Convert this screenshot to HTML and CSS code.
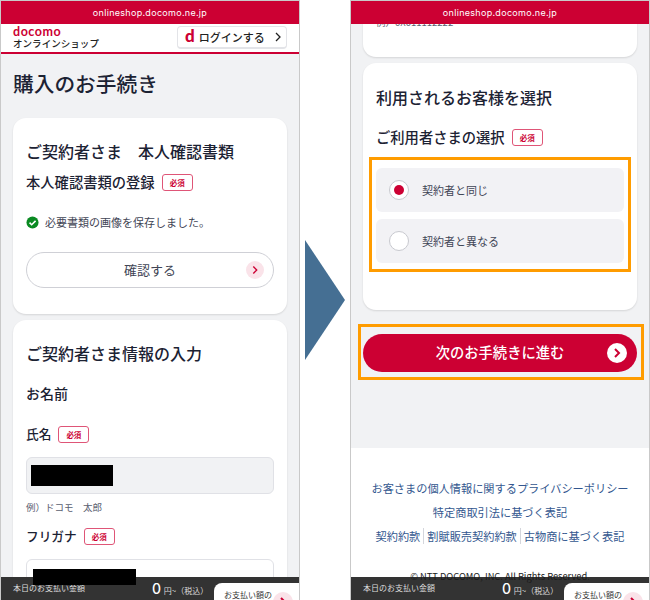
FILE: index.html
```html
<!DOCTYPE html>
<html lang="ja">
<head>
<meta charset="utf-8">
<title>購入のお手続き</title>
<link rel="stylesheet" href="styles.css">
</head>
<body>
<div class="page">
  <section class="phone">
    <div class="urlbar">onlineshop.docomo.ne.jp</div>
    <header class="site">
      <div class="brand">
        <span class="logo">docomo</span>
        <span class="shop">オンラインショップ</span>
      </div>
      <a class="login">
        <span class="d">d</span><span>ログインする</span>
        <svg class="login-chev" viewBox="0 0 8 12"><path d="M2 2l4 4-4 4" fill="none" stroke="#222" stroke-width="1.3"/></svg>
      </a>
    </header>
    <main class="content">
      <h1 class="title">購入のお手続き</h1>
      <div class="card card-doc">
        <h2 class="h2">ご契約者さま　本人確認書類</h2>
        <div class="label label-doc"><span>本人確認書類の登録</span><span class="req">必須</span></div>
        <div class="saved">
          <svg class="check" viewBox="0 0 14 14"><circle cx="7" cy="7" r="6.5" fill="#0a8a22"/><path d="M3.8 7.2l2.3 2.2 4.2-4.2" fill="none" stroke="#fff" stroke-width="1.7"/></svg>
          <span>必要書類の画像を保存しました。</span>
        </div>
        <a class="confirm">確認する
          <span class="confirm-ic"><svg viewBox="0 0 14 14"><path d="M5 3l4 4-4 4" fill="none" stroke="#cc0033" stroke-width="1.6"/></svg></span>
        </a>
      </div>
      <div class="card card-info">
        <h2 class="h2">ご契約者さま情報の入力</h2>
        <div class="label label-name"><span>お名前</span></div>
        <div class="label label-sei"><span>氏名</span><span class="req">必須</span></div>
        <div class="field filled"><span class="mask mask-a"></span></div>
        <div class="hint">例）ドコモ　太郎</div>
        <div class="label label-kana"><span>フリガナ</span><span class="req">必須</span></div>
        <div class="field"><span class="mask mask-b"></span></div>
      </div>
    </main>
    <div class="paybar">
      <span class="pay-label">本日のお支払い金額</span>
      <span class="pay-amount"><b>0</b> 円~（税込）</span>
      <span class="pay-tab">お支払い額の<i class="pay-dot"><svg viewBox="0 0 20 20"><path d="M8 6l4 4-4 4" fill="none" stroke="#cc0033" stroke-width="2"/></svg></i></span>
    </div>
  </section>

  <div class="gap"><div class="arrow"></div></div>

  <section class="phone">
    <div class="urlbar urlbar-over">onlineshop.docomo.ne.jp</div>
    <main class="content content-r">
      <div class="card card-tail"><div class="hint hint-tail">例）0X011112222</div></div>
      <div class="card card-user">
        <h2 class="h2 h2-user">利用されるお客様を選択</h2>
        <div class="label label-user"><span>ご利用者さまの選択</span><span class="req">必須</span></div>
        <div class="mark mark-radio">
          <div class="radio-row"><span class="radio on"></span><span>契約者と同じ</span></div>
          <div class="radio-row"><span class="radio"></span><span>契約者と異なる</span></div>
        </div>
      </div>
      <div class="mark mark-next">
        <a class="next">次のお手続きに進む
          <span class="next-ic"><svg viewBox="0 0 20 20"><path d="M8 6l4 4-4 4" fill="none" stroke="#cc0033" stroke-width="2"/></svg></span>
        </a>
      </div>
    </main>
    <footer class="foot">
      <a>お客さまの個人情報に関するプライバシーポリシー</a>
      <a>特定商取引法に基づく表記</a>
      <div class="foot-row"><a>契約約款</a><a>割賦販売契約約款</a><a>古物商に基づく表記</a></div>
      <small class="copy">© NTT DOCOMO, INC. All Rights Reserved.</small>
    </footer>
    <div class="paybar">
      <span class="pay-label">本日のお支払い金額</span>
      <span class="pay-amount"><b>0</b> 円~（税込）</span>
      <span class="pay-tab">お支払い額の<i class="pay-dot"><svg viewBox="0 0 20 20"><path d="M8 6l4 4-4 4" fill="none" stroke="#cc0033" stroke-width="2"/></svg></i></span>
    </div>
  </section>
</div>
</body>
</html>
```
FILE: styles.css
```css
* { box-sizing: border-box; }
html, body { margin: 0; padding: 0; background: #fff; }
body { font-family: "Noto Sans CJK JP", "Noto Sans", sans-serif; color: #1c2233; }
a { display: block; }
.page { display: flex; width: 650px; height: 600px; }
.phone {
  position: relative; width: 300px; height: 600px; flex: none;
  display: flex; flex-direction: column; overflow: hidden;
  background: #f1f2f4; border: 1px solid #c9c9c9; border-bottom: 0;
}
.gap { width: 50px; flex: none; display: flex; align-items: center; padding-left: 5px; }
.arrow { width: 40px; height: 120px; background: #456f93; clip-path: polygon(0 0, 100% 50%, 0 100%); }
.urlbar {
  height: 23px; flex: none; background: #cc0033; color: #fff;
  font: 400 9px/23px "Inter", "Liberation Sans", sans-serif; letter-spacing: .3px; text-align: center;
}
.urlbar-over { position: absolute; left: 0; right: 0; top: 0; z-index: 3; }

.site {
  height: 30px; flex: none; display: flex; justify-content: space-between; align-items: center;
  padding: 0 12px 0 12px; background: #fff; border-bottom: 2px solid #cc0033;
}
.brand { display: flex; flex-direction: column; }
.logo { font: 700 12.5px/10px "Lato", sans-serif; color: #cc0033; letter-spacing: .55px; }
.shop { font-size: 9.5px; line-height: 12px; font-weight: 500; color: #222; letter-spacing: .05px; white-space: nowrap; }
.login {
  width: 110px; height: 23px; margin-top: -2px; display: flex; align-items: center;
  padding-left: 7px; font-size: 11px; font-weight: 500; color: #222; white-space: nowrap;
  background: #fff; border: 1px solid #e3e4e8; border-bottom-width: 2px; border-radius: 4px;
}
.d { font: 900 17px/15px "Lato", sans-serif; color: #cc0033; margin-right: 4px; margin-top: -3px; }
.login-chev { width: 8px; height: 12px; margin-left: 9px; }

.content { padding: 0 12px; flex: none; }
.title { margin: 14px 0 0; font-size: 20.7px; line-height: 30px; font-weight: 500; color: #1c2233; }
.card { background: #fff; border-radius: 13px; box-shadow: 0 1px 2px rgba(0,0,0,.12); padding: 0 13px; }
.card-doc { height: 196px; margin-top: 20px; padding-top: 21px; }
.card-info { margin-top: 6px; padding-top: 21px; height: 300px; }
.h2 { margin: 0; font-size: 16px; line-height: 24px; font-weight: 500; color: #1c2233; white-space: nowrap; }
.label { display: flex; align-items: center; gap: 7px; font-size: 14.3px; line-height: 20px; font-weight: 500; color: #1c2233; }
.req {
  width: 31px; height: 17px; border: 1px solid #df5577; border-radius: 3px; color: #cc0033;
  font-size: 7.5px; font-weight: 700; line-height: 15px; text-align: center;
}
.label-doc { margin-top: 9px; }
.saved { display: flex; align-items: center; gap: 6px; margin-top: 22px; font-size: 11px; line-height: 16px; color: #3f4555; }
.check { width: 13px; height: 13px; }
.confirm {
  position: relative; height: 36px; margin-top: 22px; border: 1px solid #cfd0d6; border-radius: 18px;
  text-align: center; font-size: 13px; line-height: 33px; color: #3f4555;
}
.confirm-ic {
  position: absolute; right: 9px; top: 8px; width: 18px; height: 18px; border-radius: 50%;
  background: #fae3e9; display: flex; align-items: center; justify-content: center;
}
.confirm-ic svg { width: 12px; height: 12px; }

.label-name { margin-top: 18px; font-size: 14px; }
.label-sei { margin-top: 21px; font-size: 12.7px; }
.field { height: 37px; margin-top: 13px; border: 1px solid #e0e1e6; border-radius: 6px; padding: 7px 4px; }
.filled { background: #f1f2f4; }
.mask { display: block; position: relative; z-index: 3; background: #000; }
.mask-a { width: 82px; height: 21px; }
.mask-b { width: 103px; height: 16px; margin: 2px 0 0 2px; }
.hint { margin-top: 5px; font-size: 9.5px; line-height: 16px; color: #5a6070; }
.label-kana { margin-top: 11px; font-size: 12.7px; }
.label-kana + .field { margin-top: 13px; }

.card-tail { height: 56px; border-radius: 0 0 13px 13px; padding-top: 13px; }
.hint-tail { margin: 0; }
.card-user { height: 247px; margin-top: 6px; padding: 22px 13px 0; }
.label-user { margin-top: 18px; }
.mark { border: 3px solid #ff9c00; }
.mark-radio { width: 262px; height: 115px; margin: 10px 0 0 -7px; padding: 8px 4px 0; }
.radio-row {
  height: 44px; margin-bottom: 7px; background: #f2f2f5; border-radius: 6px;
  display: flex; align-items: center; gap: 13px; padding-left: 13px;
  font-size: 11px; color: #3f4555;
}
.radio { width: 20px; height: 20px; border-radius: 50%; background: #fff; border: 1px solid #c8c9cf; display: flex; align-items: center; justify-content: center; }
.radio.on::before { content: ""; width: 10px; height: 10px; border-radius: 50%; background: #cc0033; }
.mark-next { width: 286px; height: 56px; margin: 14px 0 0 -5px; padding: 7px 2px; }
.next {
  position: relative; height: 38px; width: 274px; border-radius: 19px; background: #cc0033; color: #fff;
  text-align: center; font-size: 14.3px; line-height: 36px; font-weight: 500;
}
.next-ic { position: absolute; right: 10px; top: 9px; width: 20px; height: 20px; border-radius: 50%; background: #fff; display: flex; }
.next-ic svg { width: 20px; height: 20px; }

.foot {
  flex: 1; margin-top: 68px; background: #fff; text-align: center;
  font-size: 11.2px; line-height: 16px; color: #33578f; padding-top: 32px;
}
.foot > a { margin-bottom: 8px; white-space: nowrap; }
.foot-row { display: flex; justify-content: center; }
.foot-row a { padding: 0 3px; }
.foot-row a + a { border-left: 1px solid #d4d6dc; }
.copy { display: block; position: relative; z-index: 3; margin-top: 25px; font-size: 9.3px; color: #1a1a1a; line-height: 14px; }

.paybar {
  position: absolute; left: 0; right: 0; bottom: 0; height: 23px; background: #333; color: #ddd;
  display: flex; align-items: flex-start; z-index: 2; font-size: 8px; line-height: 22px;
}
.pay-label { margin-left: 12px; width: 139px; }
.pay-amount { width: 62px; white-space: nowrap; }
.pay-amount b { font: 500 14px/24px "Inter", sans-serif; color: #fff; margin-right: 1px; }
.pay-tab {
  position: relative; flex: 1; height: 30px; margin-top: 6px; padding-left: 10px; background: #fff;
  border-radius: 8px 0 0 0; color: #333; font-size: 8px; line-height: 24px; white-space: nowrap;
}
.pay-dot { position: absolute; right: 6px; top: 9px; width: 20px; height: 20px; border-radius: 50%; background: #fae3e9; }
.pay-dot svg { display: block; width: 20px; height: 20px; }
```
